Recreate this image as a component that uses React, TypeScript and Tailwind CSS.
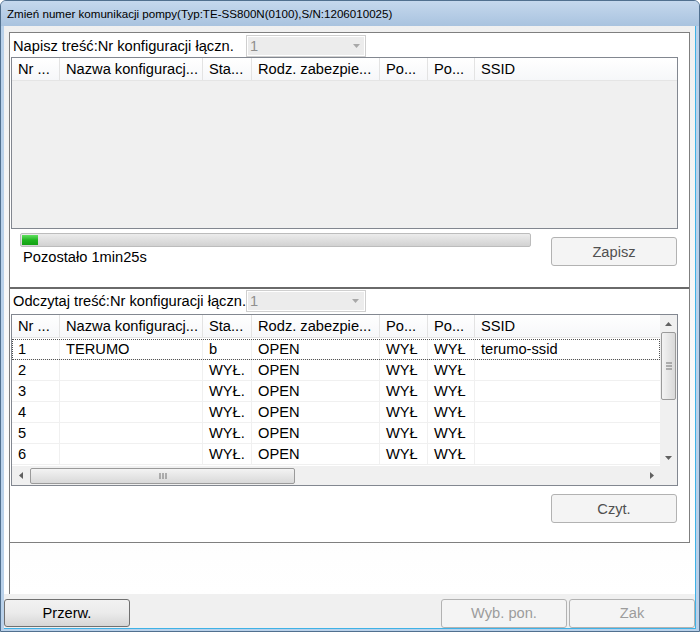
import React from "react";

const cols = [48, 143, 49, 128, 48, 47];
const headers = ["Nr ...", "Nazwa konfiguracj...", "Sta...", "Rodz. zabezpie...", "Po...", "Po...", "SSID"];
const rows = [
  ["1", "TERUMO", "b", "OPEN", "WYŁ", "WYŁ", "terumo-ssid"],
  ["2", "", "WYŁ.", "OPEN", "WYŁ", "WYŁ", ""],
  ["3", "", "WYŁ.", "OPEN", "WYŁ", "WYŁ", ""],
  ["4", "", "WYŁ.", "OPEN", "WYŁ", "WYŁ", ""],
  ["5", "", "WYŁ.", "OPEN", "WYŁ", "WYŁ", ""],
  ["6", "", "WYŁ.", "OPEN", "WYŁ", "WYŁ", ""],
];

function Header() {
  return (
    <div className="flex h-[23px] shrink-0 bg-gradient-to-b from-white to-[#f6f7f9] border-b border-[#e5e5e5]">
      {headers.map((h, i) => (
        <div
          key={i}
          className={`flex items-center pl-[6px] whitespace-nowrap overflow-hidden ${i < 6 ? "border-r border-[#e3e3e3]" : "flex-1"}`}
          style={i < 6 ? { width: cols[i] } : undefined}
        >
          {h}
        </div>
      ))}
    </div>
  );
}

function Combo({ className = "" }: { className?: string }) {
  return (
    <div className={`h-[22px] w-[120px] shrink-0 border border-[#cfcfcf] bg-white p-[1px] flex ${className}`}>
      <div className="flex-1 bg-[#ececec] flex items-center pl-[2px] text-[#8f8f8f]">1</div>
      <div className="w-[16px] bg-[#ececec] flex items-center justify-center">
        <svg width="7" height="4" viewBox="0 0 7 4"><path d="M0 0h7L3.5 4z" fill="#a8a8a8" /></svg>
      </div>
    </div>
  );
}

function Btn({ children, tone = "dark", className = "" }: { children: React.ReactNode; tone?: "dark" | "light"; className?: string }) {
  return (
    <div
      className={`h-[29px] w-[126px] shrink-0 rounded-[3px] border border-[#b2b2b2] bg-[#f4f4f4] flex items-center justify-center ${tone === "dark" ? "text-[#505050]" : "text-[#9c9c9c]"} ${className}`}
    >
      {children}
    </div>
  );
}

export default function App() {
  return (
    <div className="w-[700px] h-[632px] flex flex-col bg-[#b9d1ea] border border-[#51708f] text-[14.67px] text-black font-['Liberation_Sans',Arial,sans-serif] overflow-hidden rounded-t-[6px]">
      {/* title bar */}
      <div className="h-[25px] shrink-0 bg-gradient-to-b from-[#c5d8ed] to-[#a9c3df] flex items-center pl-[6px] text-[11.6px] text-black">
        Zmień numer komunikacji pompy(Typ:TE-SS800N(0100),S/N:1206010025)
      </div>
      {/* client */}
      <div className="flex-1 mx-[3px] mb-[2px] bg-[#f0f0f0] flex flex-col border-r border-b border-[#3fb2e6]">
        <div className="flex-1 flex flex-col bg-gradient-to-b from-[#f0f0f0] to-white">
          <div className="pt-[6px] pl-[5px] pr-[5px]">
            <div className="h-[511px] border border-[#7f7f7f] bg-white flex flex-col">
              {/* upper section */}
              <div className="h-[254px] shrink-0 flex flex-col">
                <div className="flex items-center h-[24px] pt-[2px]">
                  <div className="w-[236px] pl-[3px] whitespace-nowrap">Napisz treść:Nr konfiguracji łączn.</div>
                  <Combo />
                </div>
                <div className="ml-[1px] w-[667px] h-[172px] border border-[#828790] flex flex-col bg-[#f0f0f0]">
                  <Header />
                  <div className="flex-1 bg-[#f0f0f0]" />
                </div>
                <div className="flex pl-[10px] pt-[4px]">
                  <div className="w-[511px]">
                    <div className="h-[14px] rounded-[2px] border border-[#bcbcbc] bg-gradient-to-b from-[#ececec] to-[#d2d2d2] p-[1px]">
                      <div className="h-full w-[16px] bg-gradient-to-b from-[#5ee05e] via-[#1fb51f] to-[#12a012]" />
                    </div>
                    <div className="pl-[3px] pt-[2px] leading-[17px]">Pozostało 1min25s</div>
                  </div>
                  <Btn className="ml-[20px] mt-[4px]">Zapisz</Btn>
                </div>
              </div>
              {/* lower section */}
              <div className="flex-1 border-t-2 border-[#6a6a6a] flex flex-col">
                <div className="flex items-center h-[24px]">
                  <div className="pl-[3px] whitespace-nowrap">Odczytaj treść:Nr konfiguracji łączn.</div>
                  <Combo />
                </div>
                <div className="ml-[1px] mt-[1px] w-[667px] h-[172px] border border-[#828790] bg-white flex">
                  <div className="flex-1 flex flex-col min-w-0">
                    <Header />
                    <div className="flex-1 flex flex-col pt-[1px]">
                      {rows.map((r, ri) => (
                        <div
                          key={ri}
                          className={`flex h-[21px] shrink-0 border-b border-[#f0f0f0] ${ri === 0 ? "outline outline-1 outline-dotted outline-[#555] -outline-offset-1" : ""}`}
                        >
                          {r.map((c, ci) => (
                            <div
                              key={ci}
                              className={`flex items-center pl-[6px] whitespace-nowrap ${ci < 6 ? "border-r border-[#f0f0f0]" : "flex-1"}`}
                              style={ci < 6 ? { width: cols[ci] } : undefined}
                            >
                              {c}
                            </div>
                          ))}
                        </div>
                      ))}
                    </div>
                    {/* horizontal scrollbar */}
                    <div className="h-[19px] shrink-0 bg-[#f0f0f0] flex items-center">
                      <div className="w-[17px] flex items-center justify-center">
                        <svg width="4" height="7" viewBox="0 0 4 7"><path d="M4 0v7L0 3.5z" fill="#606060" /></svg>
                      </div>
                      <div className="ml-[1px] w-[265px] h-[16px] rounded-[2px] border border-[#9a9a9a] bg-gradient-to-b from-[#f3f3f3] to-[#d9d9d9] flex items-center justify-center">
                        <svg width="8" height="6" viewBox="0 0 8 6"><path d="M1 0v6M4 0v6M7 0v6" stroke="#707070" strokeWidth="1" /></svg>
                      </div>
                      <div className="flex-1" />
                      <div className="w-[17px] flex items-center justify-center">
                        <svg width="4" height="7" viewBox="0 0 4 7"><path d="M0 0v7L4 3.5z" fill="#606060" /></svg>
                      </div>
                    </div>
                  </div>
                  {/* vertical scrollbar */}
                  <div className="w-[17px] flex flex-col bg-[#f0f0f0]">
                    <div className="h-[17px] flex items-center justify-center">
                      <svg width="7" height="4" viewBox="0 0 7 4"><path d="M0 4h7L3.5 0z" fill="#606060" /></svg>
                    </div>
                    <div className="h-[68px] mx-[1px] rounded-[2px] border border-[#9a9a9a] bg-gradient-to-r from-[#f3f3f3] to-[#d9d9d9] flex items-center justify-center">
                      <svg width="6" height="8" viewBox="0 0 6 8"><path d="M0 1h6M0 4h6M0 7h6" stroke="#707070" strokeWidth="1" /></svg>
                    </div>
                    <div className="flex-1" />
                    <div className="h-[17px] flex items-center justify-center">
                      <svg width="7" height="4" viewBox="0 0 7 4"><path d="M0 0h7L3.5 4z" fill="#606060" /></svg>
                    </div>
                    <div className="h-[19px] bg-[#f0f0f0]" />
                  </div>
                </div>
                <div className="flex justify-end pr-[12px] pt-[8px]">
                  <Btn>Czyt.</Btn>
                </div>
              </div>
            </div>
          </div>
          <div className="flex-1 ml-[5px] border-l border-[#7f7f7f]" />
        </div>
        <div className="flex items-center h-[34px] pt-[5px] pb-[1px] bg-[#f0f0f0]">
          <div className="h-[28px] w-[126px] rounded-[3px] border border-[#707070] bg-gradient-to-b from-[#f2f2f2] via-[#ebebeb] to-[#d6d6d6] flex items-center justify-center text-black">
            Przerw.
          </div>
          <div className="flex-1" />
          <Btn tone="light" className="h-[28px] w-[125px]">Wyb. pon.</Btn>
          <Btn tone="light" className="h-[28px] w-[125px] ml-[2px]">Zak</Btn>
        </div>
      </div>
    </div>
  );
}
